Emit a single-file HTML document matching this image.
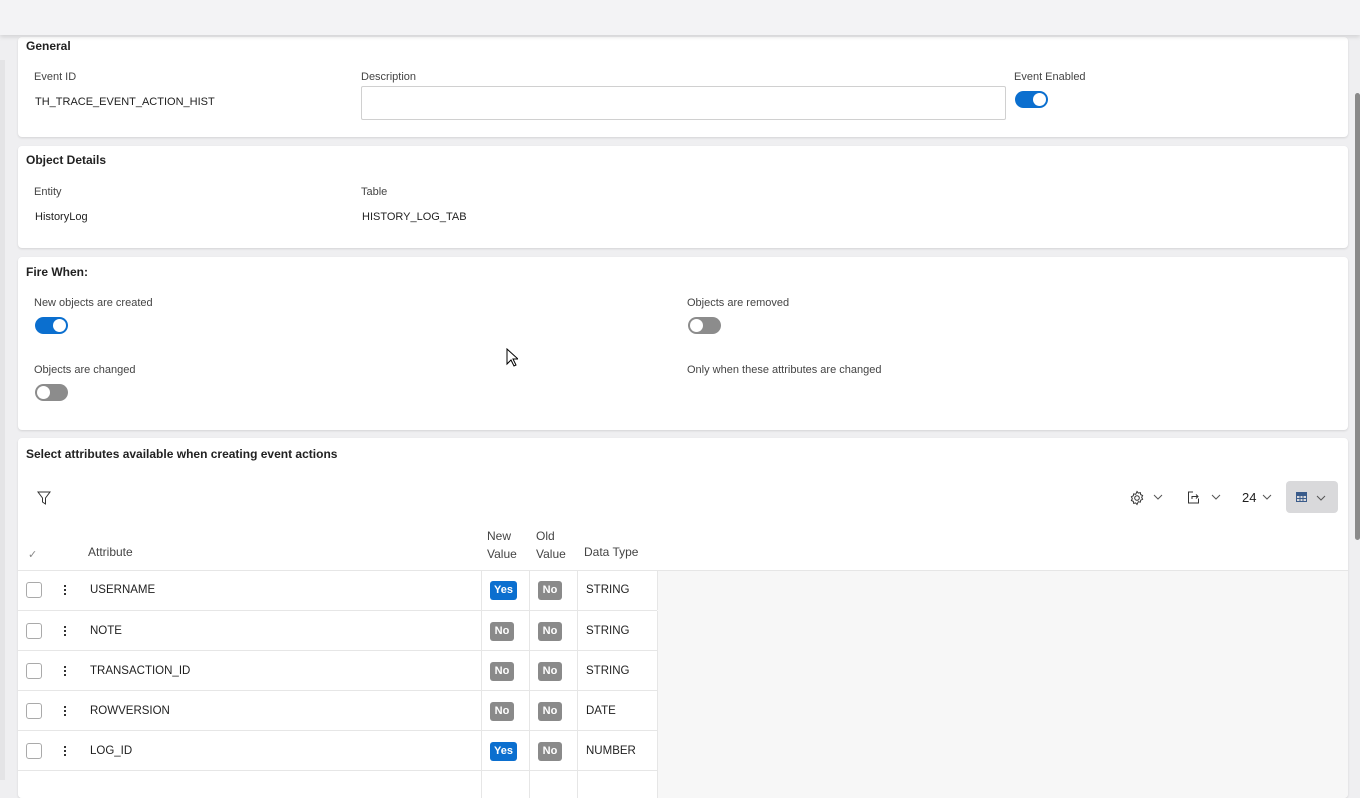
<!DOCTYPE html>
<html><head><meta charset="utf-8"><style>
*{box-sizing:border-box;margin:0;padding:0}
body{width:1360px;height:780px;overflow:hidden;background:#efeff1;font-family:"Liberation Sans",sans-serif;color:#1f1f1f;position:relative}
.top{position:absolute;left:0;top:0;width:1360px;height:35px;background:#f3f3f5;box-shadow:0 2px 4px rgba(0,0,0,.12);z-index:5}
.card{position:absolute;left:18px;width:1330px;background:#fff;border-radius:4px;box-shadow:0 1px 2px rgba(0,0,0,.12)}
.h{position:absolute;left:8px;font-size:12px;font-weight:bold;color:#222}
.lbl{position:absolute;font-size:11px;color:#444}
.val{position:absolute;font-size:11px;color:#1f1f1f}
.tg{position:absolute;width:33px;height:17px;border-radius:9px;background:#0b6fcf}
.tg::after{content:"";position:absolute;top:2px;right:2px;width:13px;height:13px;border-radius:50%;background:#fff}
.tg.off{background:#8c8c8c}
.tg.off::after{right:auto;left:2px}
.sb{position:absolute;left:1355px;top:93px;width:5px;height:447px;background:#8a8a8a;border-radius:3px}
.row{position:absolute;left:0;width:639px;height:40px;border-top:1px solid #e6e6e6}
.b{position:absolute;top:11px;height:19px;border-radius:3px;color:#fff;font-size:11px;font-weight:bold;text-align:center;line-height:19px}
.yes{background:#0b6fcf;width:27px}
.no{background:#8a8a8a;width:24px}
.cb{position:absolute;left:8px;top:12px;width:16px;height:16px;border:1px solid #aaa;border-radius:3px}
.dots{position:absolute;left:46px;top:14px;width:2px;height:12px;background:radial-gradient(circle,#222 1px,transparent 1.2px) 0 0/2px 4px repeat-y}
.cell{position:absolute;top:14px;font-size:11.5px}
.vl{position:absolute;top:0;width:1px;height:40px;background:#e6e6e6}
</style></head><body>
<div class="top"></div>
<div style="position:absolute;left:0;top:60px;width:5px;height:720px;background:#e4e4e6"></div>
<div class="sb"></div>

<div class="card" style="top:37px;height:100px">
 <div class="h" style="top:2px">General</div>
 <div class="lbl" style="left:16px;top:34px">Event ID</div>
 <div class="val" style="left:17px;top:59px">TH_TRACE_EVENT_ACTION_HIST</div>
 <div class="lbl" style="left:343px;top:34px">Description</div>
 <div style="position:absolute;left:343px;top:49px;width:645px;height:34px;border:1px solid #d0d0d0;border-radius:2px"></div>
 <div class="lbl" style="left:996px;top:34px">Event Enabled</div>
 <div class="tg" style="left:997px;top:54px"></div>
</div>

<div class="card" style="top:146px;height:102px">
 <div class="h" style="top:7px">Object Details</div>
 <div class="lbl" style="left:16px;top:40px">Entity</div>
 <div class="val" style="left:17px;top:65px">HistoryLog</div>
 <div class="lbl" style="left:343px;top:40px">Table</div>
 <div class="val" style="left:344px;top:65px">HISTORY_LOG_TAB</div>
</div>

<div class="card" style="top:257px;height:173px">
 <div class="h" style="top:8px">Fire When:</div>
 <div class="lbl" style="left:16px;top:40px">New objects are created</div>
 <div class="tg" style="left:17px;top:60px"></div>
 <div class="lbl" style="left:669px;top:40px">Objects are removed</div>
 <div class="tg off" style="left:670px;top:60px"></div>
 <div class="lbl" style="left:16px;top:107px">Objects are changed</div>
 <div class="tg off" style="left:17px;top:127px"></div>
 <div class="lbl" style="left:669px;top:107px">Only when these attributes are changed</div>
</div>

<div class="card" style="top:438px;height:360px;overflow:hidden">
 <div class="h" style="top:9px">Select attributes available when creating event actions</div>
 <svg style="position:absolute;left:19px;top:53px" width="14" height="14" viewBox="0 0 14 14"><path d="M1 1h12L8.5 7v6L5.5 11V7z" fill="none" stroke="#333" stroke-width="1"/></svg>
 <svg style="position:absolute;left:1111px;top:52px" width="16" height="16" viewBox="0 0 16 16"><circle cx="8" cy="8" r="2.3" fill="none" stroke="#333"/><path d="M8 1.5l1.3 1.6 2-.5.4 2 1.9.9-.9 1.9.9 1.9-1.9.9-.4 2-2-.5L8 14.5l-1.3-1.6-2 .5-.4-2-1.9-.9.9-1.9-.9-1.9 1.9-.9.4-2 2 .5z" fill="none" stroke="#333"/></svg>
 <svg style="position:absolute;left:1135px;top:56px" width="10" height="6"><path d="M1 1l4 4 4-4" fill="none" stroke="#555"/></svg>
 <svg style="position:absolute;left:1169px;top:52px" width="14" height="14" viewBox="0 0 14 14"><path d="M6 2H1.5v11h10V8.5" fill="none" stroke="#333"/><path d="M5 9V6.5h6M9 4.5l2 2-2 2" fill="none" stroke="#333"/></svg>
 <svg style="position:absolute;left:1193px;top:56px" width="10" height="6"><path d="M1 1l4 4 4-4" fill="none" stroke="#555"/></svg>
 <div class="val" style="left:1224px;top:52px;font-size:13px">24</div>
 <svg style="position:absolute;left:1244px;top:56px" width="10" height="6"><path d="M1 1l4 4 4-4" fill="none" stroke="#555"/></svg>
 <div style="position:absolute;left:1268px;top:43px;width:52px;height:32px;background:#d9d9db;border-radius:4px"></div>
 <svg style="position:absolute;left:1278px;top:54px" width="11" height="10"><rect x=".5" y=".5" width="10" height="9" fill="none" stroke="#3a5b8a"/><path d="M0 3.5h11M0 6.5h11M4 0v10M7 0v10" stroke="#3a5b8a"/><rect x="0" y="0" width="11" height="3" fill="#3a5b8a"/></svg>
 <svg style="position:absolute;left:1298px;top:57px" width="10" height="6"><path d="M1 1l4 4 4-4" fill="none" stroke="#555"/></svg>
 <div class="lbl" style="left:10px;top:110px;color:#888">✓</div>
 <div class="lbl" style="left:70px;top:107px;font-size:12px">Attribute</div>
 <div class="lbl" style="left:469px;top:89px;font-size:12px;line-height:18px">New<br>Value</div>
 <div class="lbl" style="left:518px;top:89px;font-size:12px;line-height:18px">Old<br>Value</div>
 <div class="lbl" style="left:566px;top:107px;font-size:12px">Data Type</div>
 <div style="position:absolute;left:0;top:132px;width:1330px;height:230px;background:#f7f7f7;border-top:1px solid #e6e6e6">
  <div style="position:absolute;left:0;top:0;width:639px;height:230px;background:#fff"></div>
 </div>
 <div class="row" style="top:132px;border-top:none"><div class="cb"></div><div class="dots"></div><div class="cell" style="left:72px">USERNAME</div><div class="vl" style="left:463px"></div><div class="b yes" style="left:472px">Yes</div><div class="vl" style="left:511px"></div><div class="b no" style="left:520px">No</div><div class="vl" style="left:559px"></div><div class="cell" style="left:568px">STRING</div><div class="vl" style="left:639px"></div></div>
 <div class="row" style="top:172px"><div class="cb"></div><div class="dots"></div><div class="cell" style="left:72px">NOTE</div><div class="vl" style="left:463px"></div><div class="b no" style="left:472px">No</div><div class="vl" style="left:511px"></div><div class="b no" style="left:520px">No</div><div class="vl" style="left:559px"></div><div class="cell" style="left:568px">STRING</div><div class="vl" style="left:639px"></div></div>
 <div class="row" style="top:212px"><div class="cb"></div><div class="dots"></div><div class="cell" style="left:72px">TRANSACTION_ID</div><div class="vl" style="left:463px"></div><div class="b no" style="left:472px">No</div><div class="vl" style="left:511px"></div><div class="b no" style="left:520px">No</div><div class="vl" style="left:559px"></div><div class="cell" style="left:568px">STRING</div><div class="vl" style="left:639px"></div></div>
 <div class="row" style="top:252px"><div class="cb"></div><div class="dots"></div><div class="cell" style="left:72px">ROWVERSION</div><div class="vl" style="left:463px"></div><div class="b no" style="left:472px">No</div><div class="vl" style="left:511px"></div><div class="b no" style="left:520px">No</div><div class="vl" style="left:559px"></div><div class="cell" style="left:568px">DATE</div><div class="vl" style="left:639px"></div></div>
 <div class="row" style="top:292px"><div class="cb"></div><div class="dots"></div><div class="cell" style="left:72px">LOG_ID</div><div class="vl" style="left:463px"></div><div class="b yes" style="left:472px">Yes</div><div class="vl" style="left:511px"></div><div class="b no" style="left:520px">No</div><div class="vl" style="left:559px"></div><div class="cell" style="left:568px">NUMBER</div><div class="vl" style="left:639px"></div></div>
 <div class="row" style="top:332px"><div class="vl" style="left:463px"></div><div class="vl" style="left:511px"></div><div class="vl" style="left:559px"></div><div class="vl" style="left:639px"></div></div>
</div>
<svg style="position:absolute;left:506px;top:348px" width="12" height="19" viewBox="0 0 12 19"><path d="M1 1v15l4-4 3 6 2-1-3-6h5z" fill="#fff" stroke="#000"/></svg>
</body></html>
